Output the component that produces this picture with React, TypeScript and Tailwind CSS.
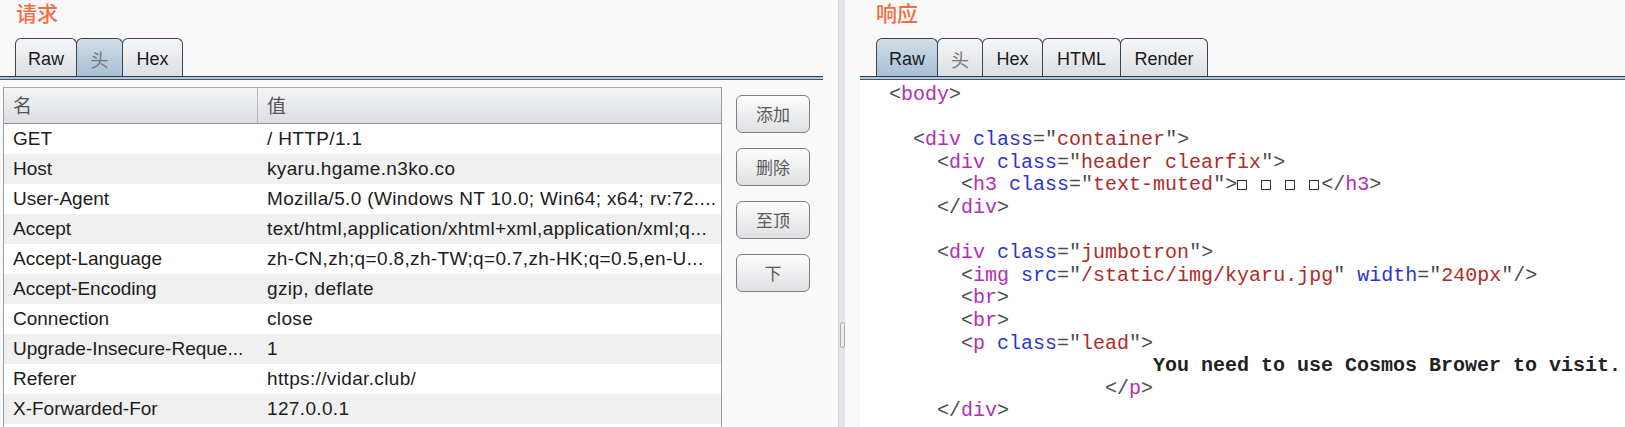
import React from 'react';

const sans = { fontFamily: '"Liberation Sans", Arial, "Noto Sans CJK SC", sans-serif' };
const cjk = { fontFamily: '"Noto Sans CJK SC", "Liberation Sans", sans-serif' };
const mono = { fontFamily: '"Liberation Mono", "DejaVu Sans Mono", monospace' };

type Tok = [string, string];

const headers: [string, string][] = [
  ['GET', '/ HTTP/1.1'],
  ['Host', 'kyaru.hgame.n3ko.co'],
  ['User-Agent', 'Mozilla/5.0 (Windows NT 10.0; Win64; x64; rv:72....'],
  ['Accept', 'text/html,application/xhtml+xml,application/xml;q...'],
  ['Accept-Language', 'zh-CN,zh;q=0.8,zh-TW;q=0.7,zh-HK;q=0.5,en-U...'],
  ['Accept-Encoding', 'gzip, deflate'],
  ['Connection', 'close'],
  ['Upgrade-Insecure-Reque...', '1'],
  ['Referer', 'https://vidar.club/'],
  ['X-Forwarded-For', '127.0.0.1'],
];

// p = punctuation, t = tag, a = attribute, v = value, b = bold text, s = spaces, x = boxes
const code: Tok[][] = [
  [['s', '  '], ['p', '<'], ['t', 'body'], ['p', '>']],
  [],
  [['s', '    '], ['p', '<'], ['t', 'div'], ['s', ' '], ['a', 'class'], ['p', '="'], ['v', 'container'], ['p', '">']],
  [['s', '      '], ['p', '<'], ['t', 'div'], ['s', ' '], ['a', 'class'], ['p', '="'], ['v', 'header clearfix'], ['p', '">']],
  [['s', '        '], ['p', '<'], ['t', 'h3'], ['s', ' '], ['a', 'class'], ['p', '="'], ['v', 'text-muted'], ['p', '">'], ['x', '4'], ['p', '</'], ['t', 'h3'], ['p', '>']],
  [['s', '      '], ['p', '</'], ['t', 'div'], ['p', '>']],
  [],
  [['s', '      '], ['p', '<'], ['t', 'div'], ['s', ' '], ['a', 'class'], ['p', '="'], ['v', 'jumbotron'], ['p', '">']],
  [['s', '        '], ['p', '<'], ['t', 'img'], ['s', ' '], ['a', 'src'], ['p', '="'], ['v', '/static/img/kyaru.jpg'], ['p', '"'], ['s', ' '], ['a', 'width'], ['p', '="'], ['v', '240px'], ['p', '"/>']],
  [['s', '        '], ['p', '<'], ['t', 'br'], ['p', '>']],
  [['s', '        '], ['p', '<'], ['t', 'br'], ['p', '>']],
  [['s', '        '], ['p', '<'], ['t', 'p'], ['s', ' '], ['a', 'class'], ['p', '="'], ['v', 'lead'], ['p', '">']],
  [['s', '                        '], ['b', 'You need to use Cosmos Brower to visit.']],
  [['s', '                    '], ['p', '</'], ['t', 'p'], ['p', '>']],
  [['s', '      '], ['p', '</'], ['t', 'div'], ['p', '>']],
];

const tokClass: Record<string, string> = {
  p: 'text-[#4d4d4d]',
  t: 'text-[#b32db8]',
  a: 'text-[#2f33cf]',
  v: 'text-[#b02a2a]',
  b: 'font-bold text-[#222222]',
  s: '',
};

// four "missing glyph" boxes, separated by single spaces (7 cells wide)
const Boxes: React.FC = () => (
  <>
    {['w-[24px]', 'w-[24px]', 'w-[24px]', 'w-[12px]'].map((w, i) => (
      <span key={i} className={`inline-flex ${w} items-center`}>
        <span className="inline-block h-[10px] w-[10px] border-[1.5px] border-[#333333]" />
      </span>
    ))}
  </>
);

const Tab: React.FC<{ label: string; w: string; active?: boolean; cn?: boolean }> = ({ label, w, active, cn }) => (
  <div
    className={`${w} -ml-px flex h-[38px] items-end justify-center rounded-t-[6px] border border-b-0 border-[#3b4455] pb-[6px] text-[18px] leading-[22px] first:ml-0 ${
      active ? 'bg-gradient-to-b from-[#d2dee9] to-[#a7bfd4]' : 'bg-gradient-to-b from-[#f6f7f8] to-[#dcdfe3]'
    } ${cn ? 'text-[#777777]' : 'text-[#1a1a1a]'}`}
    style={cn ? cjk : sans}
  >
    {label}
  </div>
);

const TabLine: React.FC = () => (
  <div className="flex flex-col">
    <div className="h-px bg-[#2e3a4e]" />
    <div className="h-[2px] bg-[#b2c6d9]" />
    <div className="h-px bg-[#4b5668]" />
  </div>
);

const Btn: React.FC<{ label: string }> = ({ label }) => (
  <div
    className="flex h-[38px] w-[74px] items-center justify-center rounded-[6px] border border-[#7d7f83] bg-gradient-to-b from-[#fdfdfd] to-[#dfe0e3] text-[17px] text-[#5a5a5a]"
    style={cjk}
  >
    {label}
  </div>
);

export default function App() {
  return (
    <div className="flex h-[427px] w-[1625px] overflow-hidden bg-[#f9f9f9]">
      {/* 请求 */}
      <div className="flex w-[823px] flex-col">
        <div className="h-[38px] pl-[16px] pt-[2px] text-[21px] font-medium leading-[20px] text-[#f56d43]" style={cjk}>
          请求
        </div>
        <div className="flex pl-[15px]">
          <Tab label="Raw" w="w-[62px]" />
          <Tab label="头" w="w-[47px]" active cn />
          <Tab label="Hex" w="w-[61px]" />
        </div>
        <TabLine />
        <div className="flex flex-1 pt-[7px]">
          <div className="ml-[3px] flex w-[719px] flex-col border-x border-[#9a9da3] bg-white" style={sans}>
            <div className="flex h-[37px] border-y border-t-[#a9acb1] border-b-[#8f9297] bg-gradient-to-b from-[#f4f5f6] to-[#dcdee2] text-[19px] text-[#555555]">
              <div className="flex w-[254px] items-center border-r border-[#b5b8bc] pl-[9px]" style={cjk}>
                名
              </div>
              <div className="flex items-center pl-[9px]" style={cjk}>
                值
              </div>
            </div>
            {headers.map(([k, v], i) => (
              <div
                key={k}
                className={`flex h-[30px] items-center whitespace-nowrap text-[19px] text-[#1c1c1c] ${
                  i % 2 === 1 ? 'bg-[#f0f0f0]' : 'bg-white'
                }`}
              >
                <div className="w-[255px] overflow-hidden pl-[9px]">{k}</div>
                <div className="flex-1 overflow-hidden pl-[8px] tracking-[0.35px]">{v}</div>
              </div>
            ))}
          </div>
          <div className="ml-[14px] flex flex-col gap-[15px] pt-[8px]">
            <Btn label="添加" />
            <Btn label="删除" />
            <Btn label="至顶" />
            <Btn label="下" />
          </div>
        </div>
      </div>

      {/* splitter */}
      <div className="w-[15px]" />
      <div className="flex w-[7px] flex-col border-l border-[#cfd3d8] bg-[#e1e4e8]">
        <div className="mx-auto mt-[322px] h-[26px] w-[5px] rounded-[3px] border border-[#a5a9ae] bg-[#eceef0]" />
      </div>
      <div className="w-[15px]" />

      {/* 响应 */}
      <div className="flex flex-1 flex-col">
        <div className="h-[38px] pl-[16px] pt-[2px] text-[21px] font-medium leading-[20px] text-[#f56d43]" style={cjk}>
          响应
        </div>
        <div className="flex pl-[16px]">
          <Tab label="Raw" w="w-[62px]" active />
          <Tab label="头" w="w-[46px]" cn />
          <Tab label="Hex" w="w-[61px]" />
          <Tab label="HTML" w="w-[79px]" />
          <Tab label="Render" w="w-[88px]" />
        </div>
        <TabLine />
        <div className="flex-1 bg-white pl-[5px] pt-[4px] text-[20px]" style={mono}>
          {code.map((line, i) => (
            <div key={i} className="h-[22.6px] whitespace-pre leading-[22.6px]">
              {line.map(([k, t], j) =>
                k === 'x' ? (
                  <Boxes key={j} />
                ) : (
                  <span key={j} className={tokClass[k]}>
                    {t}
                  </span>
                )
              )}
            </div>
          ))}
        </div>
      </div>
    </div>
  );
}
